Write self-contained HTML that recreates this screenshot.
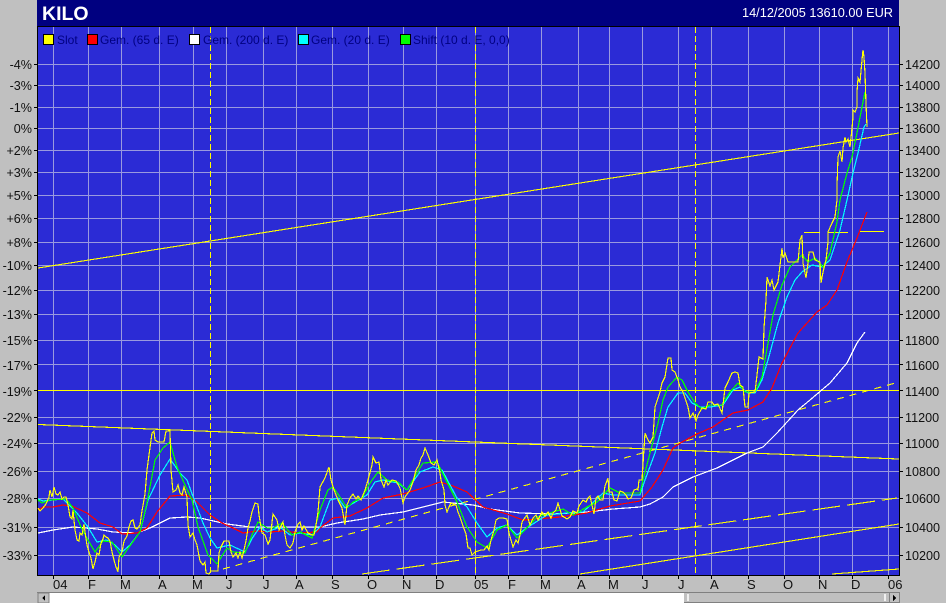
<!DOCTYPE html>
<html><head><meta charset="utf-8"><style>
html,body{margin:0;padding:0;background:#c0c0c0;width:946px;height:603px;overflow:hidden}
svg{display:block}
text{font-family:"Liberation Sans",sans-serif}
.l{font-size:12.6px;fill:#111;text-anchor:end}
.r{font-size:12.6px;fill:#111}
.b{font-size:13px;fill:#111}
.g{font-size:12px;fill:#000080}
</style></head><body>
<svg width="946" height="603" viewBox="0 0 946 603" xmlns="http://www.w3.org/2000/svg">
<rect width="946" height="603" fill="#c0c0c0"/>
<rect x="37" y="0" width="862" height="26" fill="#000080"/>
<rect x="37" y="26" width="862" height="549" fill="#2b2bd5"/>
<g shape-rendering="crispEdges">
<path fill="none" stroke="#9a9adf" stroke-width="1" d="M53.5 27V575M88.5 27V575M121.5 27V575M159.5 27V575M193.5 27V575M226.5 27V575M263.5 27V575M296.5 27V575M332.5 27V575M368.5 27V575M403.5 27V575M436.5 27V575M475.5 27V575M508.5 27V575M541.5 27V575M578.5 27V575M609.5 27V575M642.5 27V575M678.5 27V575M711.5 27V575M748.5 27V575M784.5 27V575M819.5 27V575M852.5 27V575M888.5 27V575
M37 64.5H899M37 85.5H899M37 107.5H899M37 128.5H899M37 150.5H899M37 172.5H899M37 195.5H899M37 218.5H899M37 242.5H899M37 265.5H899M37 290.5H899M37 314.5H899M37 340.5H899M37 364.5H899M37 390.5H899M37 417.5H899M37 443.5H899M37 471.5H899M37 498.5H899M37 527.5H899M37 555.5H899"/>
<path fill="none" stroke="#000" d="M37 26.5H899M37.5 26V575.5M899.5 26V576M37 575.5H900"/>
<path fill="none" stroke="#000" d="M34 64.5h3M34 85.5h3M34 107.5h3M34 128.5h3M34 150.5h3M34 172.5h3M34 195.5h3M34 218.5h3M34 242.5h3M34 265.5h3M34 290.5h3M34 314.5h3M34 340.5h3M34 364.5h3M34 390.5h3M34 417.5h3M34 443.5h3M34 471.5h3M34 498.5h3M34 527.5h3M34 555.5h3
M900 64.5h3M900 85.5h3M900 107.5h3M900 128.5h3M900 150.5h3M900 172.5h3M900 195.5h3M900 218.5h3M900 242.5h3M900 265.5h3M900 290.5h3M900 314.5h3M900 340.5h3M900 364.5h3M900 390.5h3M900 417.5h3M900 443.5h3M900 471.5h3M900 498.5h3M900 527.5h3M900 555.5h3
M53.5 576v3M88.5 576v3M121.5 576v3M159.5 576v3M193.5 576v3M226.5 576v3M263.5 576v3M296.5 576v3M332.5 576v3M368.5 576v3M403.5 576v3M436.5 576v3M475.5 576v3M508.5 576v3M541.5 576v3M578.5 576v3M609.5 576v3M642.5 576v3M678.5 576v3M711.5 576v3M748.5 576v3M784.5 576v3M819.5 576v3M852.5 576v3M888.5 576v3"/>
<!-- vertical dashed -->
<path fill="none" stroke="#ffff00" stroke-dasharray="6 3" d="M210.5 27V575M475.5 27V575M695.5 27V575"/>
<!-- trend lines -->
<g fill="none" stroke="#ffff00" stroke-width="1.1">
<path d="M38 268L899 133"/>
<path d="M38 424.5L899 459"/>
<path stroke-dasharray="7 6" d="M223 569L899 382"/>
<path stroke-dasharray="28 7" d="M362 574L897 498"/>
<path d="M580 574L899 524"/>
<path d="M832 574L899 569"/>
</g>
<g fill="#ffff00">
<rect x="38" y="390" width="861" height="1"/>
<rect x="804" y="232" width="16" height="1"/>
<rect x="828" y="232" width="20" height="1"/>
<rect x="860" y="231" width="24" height="1"/>
</g>
<!-- white 200d -->
<polyline fill="none" stroke="#ffffff" stroke-width="1.2" points="38,533 53,530 73,527 97,529 113,532 137,533 150,528 170,518 187,517 200,518 227,524 250,527 283,527 320,527 337,523 363,519 380,515 403,512 423,507 443,502 473,505 490,509 520,513 553,514 587,512 613,509 640,507 650,504 663,497 673,487 693,477 717,468 747,453 763,447 777,433 798,410 810,400 830,383 847,363 857,343 865,332"/>
<!-- red 65d -->
<polyline fill="none" stroke="#ff0000" stroke-width="1.2" points="38,510 43,507 53,507 63,505 72,506 87,513 100,523 113,527 122,534 137,533 147,528 157,512 170,496 187,495 197,502 210,515 222,523 233,528 243,533 257,531 270,532 283,531 300,533 317,532 320,528 333,518 350,516 367,508 383,498 403,494 423,488 440,482 453,486 467,492 483,507 507,514 523,520 537,519 560,517 587,513 610,506 640,501 652,487 663,470 673,448 682,442 697,434 713,427 733,413 748,410 763,402 772,388 782,363 798,333 817,312 827,305 837,290 847,262 857,238 867,212"/>
<!-- cyan 20d -->
<polyline fill="none" stroke="#00ffff" stroke-width="1.2" points="38,499 43,501 63,499 77,513 88,527 97,542 107,540 115,545 122,552 130,545 140,532 148,500 160,475 170,459 180,473 187,480 195,502 203,523 210,538 217,548 230,545 245,552 253,537 260,527 267,532 280,527 290,535 300,533 312,535 320,527 330,500 338,498 345,508 357,501 367,495 375,482 383,480 398,483 407,490 420,472 433,467 442,470 457,498 467,507 477,523 487,537 497,528 507,525 517,535 528,527 547,515 567,513 583,512 603,493 613,495 640,495 645,480 655,453 662,427 668,407 678,393 685,393 692,403 700,407 710,407 723,405 733,390 740,387 748,393 755,393 762,380 768,360 778,323 787,297 795,280 802,272 812,265 822,267 830,260 840,230 847,200 853,173 858,153 864,127 866,124"/>
<!-- green 10d -->
<polyline fill="none" stroke="#00ff00" stroke-width="1.2" points="38,500 42,503 50,500 66,499 73,508 81,527 88,540 95,552 103,541 112,542 122,557 132,543 140,532 147,503 155,460 163,448 170,442 177,467 185,485 192,500 198,527 208,555 217,564 227,548 233,552 245,553 252,535 258,522 267,528 273,528 282,523 292,535 300,532 312,538 320,510 328,490 333,487 340,497 347,508 353,502 362,498 370,483 378,472 387,480 398,482 407,490 417,473 423,463 437,462 445,478 457,502 467,527 477,542 487,548 497,530 507,525 517,538 523,532 537,517 563,509 573,515 587,507 597,502 610,488 620,493 640,493 643,480 650,453 658,423 663,400 668,387 677,377 682,380 688,392 695,403 702,409 710,405 722,405 730,392 738,383 745,392 755,392 762,377 765,360 773,315 782,285 790,267 802,255 808,262 815,258 823,267 830,253 837,222 840,200 847,173 852,157 857,133 862,107 865,92 866,97"/>
<!-- yellow price -->
<polyline fill="none" stroke="#ffff00" stroke-width="1.15" points="38,508 40,511 43,508 46,504 49,497 50,490 52,497 54,487 56,494 58,495 60,492 62,499 64,497 66,497 68,505 70,517 72,519 73,510 75,530 77,540 79,541 80,533 82,535 84,524 85,532 87,545 89,552 91,558 93,569 95,562 97,553 99,555 101,543 103,539 104,535 106,537 108,538 110,541 112,552 114,560 116,567 118,572 119,557 122,552 124,541 127,536 129,527 131,521 133,520 135,528 137,529 140,525 142,511 145,494 147,470 149,455 152,433 154,431 155,440 158,442 164,442 166,431 170,431 171,470 173,492 176,490 178,485 180,493 182,495 184,487 187,497 188,525 190,537 193,533 195,540 197,545 200,561 203,565 205,562 206,573 209,574 211,571 218,571 219,553 221,547 224,541 229,541 231,552 233,557 236,553 238,558 240,552 242,558 244,550 246,541 248,528 250,521 252,512 255,503 258,504 259,515 262,533 265,535 268,544 270,540 273,514 277,520 279,530 283,522 285,535 287,545 290,548 293,543 295,532 298,524 300,522 302,530 304,526 308,533 312,535 314,535 316,525 318,512 320,487 325,478 329,467 331,480 334,490 338,500 342,508 345,525 347,505 350,498 353,494 356,499 358,496 361,500 365,490 368,480 372,465 373,457 376,463 379,462 381,480 384,487 386,480 388,485 392,480 396,481 400,488 403,503 405,497 410,490 413,482 416,470 419,465 421,458 423,455 425,448 428,455 431,463 434,465 437,460 440,473 441,480 444,490 445,505 447,512 449,507 451,503 453,504 456,505 458,512 460,517 463,526 466,534 468,548 470,548 472,555 475,552 481,550 484,550 487,546 489,550 491,540 494,530 496,520 499,518 503,518 507,519 509,533 511,540 513,547 516,540 518,543 520,535 522,522 524,519 527,515 530,525 533,518 536,515 538,520 542,512 545,516 548,512 551,518 553,513 556,510 558,503 562,516 564,517 567,519 570,517 573,511 577,513 579,506 583,500 586,502 588,498 590,496 592,505 594,514 596,498 598,496 600,500 603,500 605,486 608,478 609,492 612,492 614,500 617,501 620,491 623,492 626,495 628,499 631,498 634,490 637,489 638,490 639,480 642,480 645,433 648,440 650,443 653,437 655,407 660,392 662,383 665,377 668,358 671,358 672,370 675,372 678,380 680,387 683,392 688,407 690,418 693,413 696,421 698,415 702,408 706,409 708,402 712,402 714,405 718,404 722,413 725,388 728,382 732,373 735,372 738,373 740,385 743,387 745,407 748,407 749,393 755,392 757,375 759,357 763,359 764,328 766,300 767,277 770,286 772,280 774,290 778,282 781,257 782,248 783,258 785,253 788,262 798,262 800,240 802,235 803,263 806,278 808,263 809,252 813,252 815,260 820,262 821,283 823,272 826,260 828,242 828,232 832,223 835,217 837,200 837,186 838,157 840,151 842,162 843,148 845,137 846,142 848,139 850,147 852,128 853,117 853,110 855,112 857,107 857,92 858,78 860,82 862,60 863,50 864,57 865,73 866,104 867,127"/>
<!-- legend swatches -->
<g stroke="#000" stroke-width="1">
<rect x="43.5" y="34.5" width="10" height="10" fill="#ffff00"/>
<rect x="87.5" y="34.5" width="10" height="10" fill="#ff0000"/>
<rect x="189.5" y="34.5" width="10" height="10" fill="#ffffff"/>
<rect x="298.5" y="34.5" width="10" height="10" fill="#00ffff"/>
<rect x="400.5" y="34.5" width="10" height="10" fill="#00ff00"/>
</g>
<!-- scrollbar -->
<rect x="37" y="592" width="863" height="1" fill="#808080"/>
<rect x="37" y="593" width="863" height="10" fill="#c0c0c0"/>
<rect x="49" y="593" width="635" height="10" fill="#ffffff"/>
<rect x="38" y="593" width="11" height="10" fill="#c0c0c0" stroke="#808080" stroke-width="1"/>
<rect x="684" y="593" width="205" height="9" fill="#c0c0c0"/>
<rect x="684" y="602" width="216" height="1" fill="#808080"/>
<rect x="687" y="594" width="2" height="7" fill="#f0f0f0"/>
<rect x="884" y="594" width="2" height="7" fill="#f0f0f0"/>
<rect x="889" y="593" width="1" height="10" fill="#808080"/>
<rect x="899" y="593" width="1" height="10" fill="#808080"/>
<path d="M45 595v6l-3-3z" fill="#000"/>
<path d="M893 595v6l3-3z" fill="#000"/>
</g>
<text x="42" y="20" font-size="19.5" font-weight="bold" fill="#fff">KILO</text>
<text x="893" y="17" font-size="12.75" fill="#fff" text-anchor="end">14/12/2005 13610.00 EUR</text>
<text class="g" x="57" y="44">Slot</text>
<text class="g" x="100" y="44">Gem. (65 d. E)</text>
<text class="g" x="203" y="44">Gem. (200 d. E)</text>
<text class="g" x="311" y="44">Gem. (20 d. E)</text>
<text class="g" x="413" y="44">Shift (10 d. E, 0,0)</text>
<text class="l" x="32" y="69">-4%</text>
<text class="l" x="32" y="90">-3%</text>
<text class="l" x="32" y="112">-1%</text>
<text class="l" x="32" y="133">0%</text>
<text class="l" x="32" y="155">+2%</text>
<text class="l" x="32" y="177">+3%</text>
<text class="l" x="32" y="200">+5%</text>
<text class="l" x="32" y="223">+6%</text>
<text class="l" x="32" y="247">+8%</text>
<text class="l" x="32" y="270">-10%</text>
<text class="l" x="32" y="295">-12%</text>
<text class="l" x="32" y="319">-13%</text>
<text class="l" x="32" y="345">-15%</text>
<text class="l" x="32" y="370">-17%</text>
<text class="l" x="32" y="396">-19%</text>
<text class="l" x="32" y="422">-22%</text>
<text class="l" x="32" y="448">-24%</text>
<text class="l" x="32" y="476">-26%</text>
<text class="l" x="32" y="503">-28%</text>
<text class="l" x="32" y="532">-31%</text>
<text class="l" x="32" y="560">-33%</text>
<text class="r" x="905" y="69">14200</text>
<text class="r" x="905" y="90">14000</text>
<text class="r" x="905" y="112">13800</text>
<text class="r" x="905" y="133">13600</text>
<text class="r" x="905" y="155">13400</text>
<text class="r" x="905" y="177">13200</text>
<text class="r" x="905" y="200">13000</text>
<text class="r" x="905" y="223">12800</text>
<text class="r" x="905" y="247">12600</text>
<text class="r" x="905" y="270">12400</text>
<text class="r" x="905" y="295">12200</text>
<text class="r" x="905" y="319">12000</text>
<text class="r" x="905" y="345">11800</text>
<text class="r" x="905" y="370">11600</text>
<text class="r" x="905" y="396">11400</text>
<text class="r" x="905" y="422">11200</text>
<text class="r" x="905" y="448">11000</text>
<text class="r" x="905" y="476">10800</text>
<text class="r" x="905" y="503">10600</text>
<text class="r" x="905" y="532">10400</text>
<text class="r" x="905" y="560">10200</text>
<text class="b" x="53" y="589">04</text>
<text class="b" x="88" y="589">F</text>
<text class="b" x="120" y="589">M</text>
<text class="b" x="158" y="589">A</text>
<text class="b" x="192" y="589">M</text>
<text class="b" x="226" y="589">J</text>
<text class="b" x="263" y="589">J</text>
<text class="b" x="295" y="589">A</text>
<text class="b" x="331" y="589">S</text>
<text class="b" x="367" y="589">O</text>
<text class="b" x="402" y="589">N</text>
<text class="b" x="435" y="589">D</text>
<text class="b" x="474" y="589">05</text>
<text class="b" x="508" y="589">F</text>
<text class="b" x="540" y="589">M</text>
<text class="b" x="577" y="589">A</text>
<text class="b" x="608" y="589">M</text>
<text class="b" x="642" y="589">J</text>
<text class="b" x="678" y="589">J</text>
<text class="b" x="710" y="589">A</text>
<text class="b" x="747" y="589">S</text>
<text class="b" x="783" y="589">O</text>
<text class="b" x="818" y="589">N</text>
<text class="b" x="851" y="589">D</text>
<text class="b" x="888" y="589">06</text>
</svg>
</body></html>
